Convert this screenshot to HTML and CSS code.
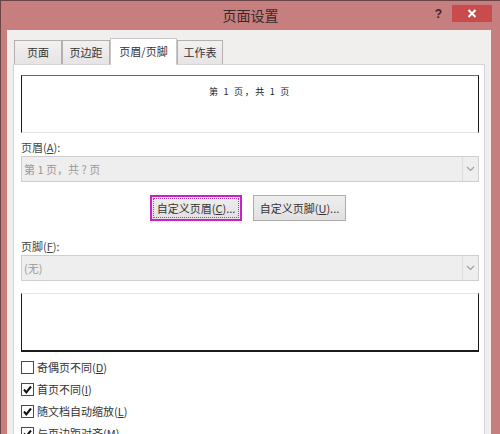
FILE: index.html
```html
<!DOCTYPE html>
<html lang="zh-CN">
<head>
<meta charset="utf-8">
<title>页面设置</title>
<link rel="stylesheet" href="styles.css">
</head>
<body>
<div class="window">
  <div class="titlebar">
    <div></div>
    <div class="title">页面设置</div>
    <div class="controls">
      <span class="help">?</span>
      <span class="close"><svg width="10" height="9" viewBox="0 0 10 9"><path d="M1.5 1 L8.5 8 M8.5 1 L1.5 8" stroke="#fff" stroke-width="2" fill="none"/></svg></span>
    </div>
  </div>
  <div class="client">
    <div class="tabs">
      <div class="tab tab-page">页面</div>
      <div class="tab tab-margin">页边距</div>
      <div class="tab tab-hf active">页眉/页脚</div>
      <div class="tab tab-sheet">工作表</div>
    </div>
    <div class="panel">
      <div class="preview preview-header"><span class="preview-text">第 1 页，共 1 页</span></div>
      <div class="label">页眉(<u>A</u>):</div>
      <div class="select">
        <span class="sel-text">第 1 页，共 ? 页</span>
        <span class="arrow"><svg width="9" height="6" viewBox="0 0 9 6"><polyline points="1,1 4.5,4.5 8,1" stroke="#a0a0a0" stroke-width="1.2" fill="none"/></svg></span>
      </div>
      <div class="buttons">
        <div class="btn btn-focus"><span class="btn-inner">自定义页眉(<u>C</u>)...</span></div>
        <div class="btn">自定义页脚(<u>U</u>)...</div>
      </div>
      <div class="label label-footer">页脚(<u>F</u>):</div>
      <div class="select">
        <span class="sel-text">(无)</span>
        <span class="arrow"><svg width="9" height="6" viewBox="0 0 9 6"><polyline points="1,1 4.5,4.5 8,1" stroke="#a0a0a0" stroke-width="1.2" fill="none"/></svg></span>
      </div>
      <div class="preview preview-footer"></div>
      <div class="checks">
        <div class="check"><span class="box"></span><span>奇偶页不同(<u>D</u>)</span></div>
        <div class="check"><span class="box"><svg width="11" height="11" viewBox="0 0 11 11"><polyline points="2,5.5 4.3,8.3 9,2.5" stroke="#111" stroke-width="2" fill="none"/></svg></span><span>首页不同(<u>I</u>)</span></div>
        <div class="check"><span class="box"><svg width="11" height="11" viewBox="0 0 11 11"><polyline points="2,5.5 4.3,8.3 9,2.5" stroke="#111" stroke-width="2" fill="none"/></svg></span><span>随文档自动缩放(<u>L</u>)</span></div>
        <div class="check"><span class="box"><svg width="11" height="11" viewBox="0 0 11 11"><polyline points="2,5.5 4.3,8.3 9,2.5" stroke="#111" stroke-width="2" fill="none"/></svg></span><span>与页边距对齐(<u>M</u>)</span></div>
      </div>
    </div>
  </div>
</div>
</body>
</html>
```

FILE: styles.css
```css
* { box-sizing: border-box; }
html, body { margin: 0; padding: 0; }
body {
  font-family: "Noto Sans CJK SC", "Noto Sans", sans-serif;
  font-size: 11px;
  color: #333;
  background: #c67e7e;
}
.window {
  width: 500px;
  height: 434px;
  overflow: hidden;
  background: #c67e7e;
  border-left: 1px solid #6b4545;
  border-top: 1px solid #6b4545;
}
.titlebar {
  height: 29px;
  display: grid;
  grid-template-columns: 1fr auto 1fr;
}
.title {
  font-size: 14px;
  line-height: 29px;
  color: #3a2828;
}
.controls {
  justify-self: end;
  display: flex;
  align-items: flex-start;
  margin-right: 8px;
}
.help {
  font-family: "Liberation Sans", sans-serif;
  font-weight: bold;
  font-size: 12px;
  color: #3a2424;
  line-height: 14px;
  margin-top: 6px;
  margin-right: 10px;
}
.close {
  width: 40px;
  height: 17px;
  margin-top: 4px;
  background: #c84c4c;
  display: flex;
  align-items: center;
  justify-content: center;
}
.client {
  margin-left: 6px;
  width: 484px;
  height: 410px;
  background: #f1eeee;
  padding: 8px 0 0 6px;
}
.tabs {
  display: flex;
  align-items: flex-end;
  padding-left: 1px;
  height: 26px;
}
.tab {
  height: 24px;
  border: 1px solid #b4b0b0;
  border-bottom: none;
  background: linear-gradient(#f2f0f0, #e6e4e4);
  color: #333;
  display: flex;
  align-items: center;
  justify-content: center;
  font-size: 11px;
  line-height: 1;
}
.tab-page { width: 48px; }
.tab-margin { width: 48px; }
.tab-hf { width: 67px; }
.tab-sheet { width: 46px; }
.tab.active {
  height: 27px;
  margin-bottom: -1px;
  background: #fff;
  border-color: #c8c6c6;
  position: relative;
  z-index: 1;
  padding-bottom: 2px;
}
.panel {
  width: 472px;
  height: 400px;
  background: #fff;
  border: 1px solid #d6d4d4;
  padding: 10px 5px 0 7px;
}
.preview {
  width: 458px;
  background: #fff;
  border-left: 1px solid #1a1a1a;
  border-right: 1px solid #1a1a1a;
}
.preview-header {
  height: 58px;
  border-top: 1px solid #6a6a6a;
  border-bottom: 1px solid #e2e2e2;
  display: flex;
  justify-content: center;
  padding-top: 9px;
}
.preview-text {
  font-size: 9px;
  line-height: 13px;
  letter-spacing: 1.7px;
  color: #222;
  white-space: pre;
}
.preview-footer {
  height: 59px;
  margin-top: 12px;
  border-top: 1px solid #e4e4e4;
  border-bottom: 2px solid #1a1a1a;
}
.label {
  margin-top: 6px;
  height: 17px;
  line-height: 17px;
  color: #444;
}
.label-footer { margin-top: 17px; }
.select {
  width: 458px;
  height: 26px;
  border: 1px solid #cfcdcd;
  background: #efeeee;
  display: flex;
  align-items: center;
}
.sel-text {
  flex: 1;
  padding-left: 2px;
  color: #9a9898;
  line-height: 1;
}
.arrow {
  width: 16px;
  height: 24px;
  border-left: 1px solid #dedcdc;
  display: flex;
  align-items: center;
  justify-content: center;
}
.buttons {
  margin-top: 13px;
  display: flex;
  justify-content: center;
  gap: 11px;
  padding-right: 4px;
}
.btn {
  width: 93px;
  height: 26px;
  border: 1px solid #adabab;
  background: linear-gradient(#efeeee, #e2e0e0);
  display: flex;
  align-items: center;
  justify-content: center;
  color: #333;
  white-space: nowrap;
  line-height: 1;
}
.btn-focus {
  width: 92px;
  border: 2px solid #cc1fcc;
  padding: 1px;
}
.btn-inner {
  flex: 1;
  align-self: stretch;
  border: 1px dotted #b040b0;
  display: flex;
  align-items: center;
  justify-content: center;
}
.checks {
  margin-top: 4px;
}
.check {
  height: 22px;
  display: flex;
  align-items: center;
  gap: 3px;
  color: #333;
}
.box {
  width: 13px;
  height: 13px;
  border: 1px solid #4a4a4a;
  background: #fff;
  display: flex;
  align-items: center;
  justify-content: center;
}
```
